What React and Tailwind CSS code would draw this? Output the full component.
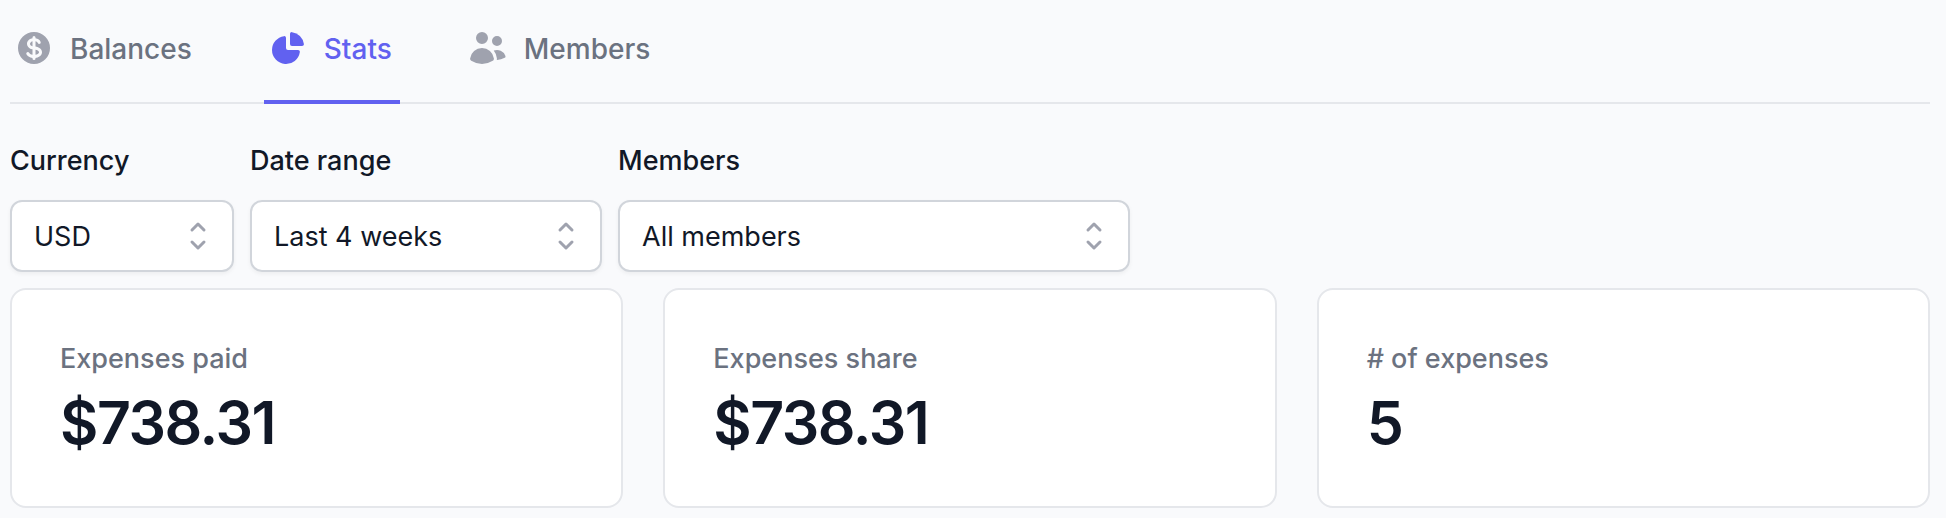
import { useState } from "react";
import { HiMiniCurrencyDollar, HiMiniChartPie, HiMiniUsers } from "react-icons/hi2";

const tabs = [
  { name: "Balances", icon: HiMiniCurrencyDollar },
  { name: "Stats", icon: HiMiniChartPie },
  { name: "Members", icon: HiMiniUsers },
];

const stats = [
  { name: "Expenses paid", value: "$738.31" },
  { name: "Expenses share", value: "$738.31" },
  { name: "# of expenses", value: "5" },
];

function SelectField({ id, label, options, width }) {
  return (
    <div className={width}>
      <label htmlFor={id} className="block font-medium text-[#111827]">
        {label}
      </label>
      <div className="mt-[18px] grid items-center">
        <select
          id={id}
          className="col-start-1 row-start-1 h-18 w-full appearance-none rounded-xl border-2 border-[#d1d5db] bg-white pl-[22px] pr-16 pt-0.5 text-[#111827] shadow-[0_2px_4px_rgba(0,0,0,0.05)]"
        >
          {options.map((option) => (
            <option key={option}>{option}</option>
          ))}
        </select>
        <svg
          viewBox="0 0 20 20"
          fill="none"
          stroke="currentColor"
          strokeWidth="1.5"
          strokeLinecap="round"
          strokeLinejoin="round"
          aria-hidden="true"
          className="pointer-events-none col-start-1 row-start-1 mr-4 size-10 justify-self-end text-[#9fa2ae]"
        >
          <path d="M7 7l3-3 3 3m0 6l-3 3-3-3" />
        </svg>
      </div>
    </div>
  );
}

export default function App() {
  const [current, setCurrent] = useState("Stats");

  return (
    <div className="min-h-screen bg-[#f9fafc] pb-2.5 pl-2.5 pr-4 font-['Inter',sans-serif] text-[27px] leading-[42px]">
      <nav className="flex gap-16 border-b-2 border-[#e5e7eb] text-[28px] leading-[42px]">
        {tabs.map((tab) => {
          const active = tab.name === current;
          return (
            <a
              key={tab.name}
              href="#"
              onClick={() => setCurrent(tab.name)}
              aria-current={active ? "page" : undefined}
              className={`-mb-0.5 flex items-start border-b-4 px-2 pb-[30px] pt-7 font-medium ${
                active
                  ? "border-[#6161f0] text-[#6161f0]"
                  : "border-transparent text-[#6b7280]"
              }`}
            >
              <tab.icon
                className={`-ml-1 mr-4 size-10 ${active ? "text-[#6161f0]" : "text-[#9fa2ae]"}`}
              />
              {tab.name}
            </a>
          );
        })}
      </nav>

      <div className="mt-9 flex gap-4">
        <SelectField id="currency" label="Currency" options={["USD"]} width="w-56" />
        <SelectField id="range" label="Date range" options={["Last 4 weeks"]} width="w-88" />
        <SelectField id="members" label="Members" options={["All members"]} width="w-128" />
      </div>

      <dl className="mt-4 grid grid-cols-3 gap-10">
        {stats.map((stat) => (
          <div key={stat.name} className="rounded-2xl border-2 border-[#e5e7eb] bg-white p-12">
            <dt className="font-medium text-[#6b7280]">{stat.name}</dt>
            <dd className="mt-2 text-[59px] leading-[70px] font-semibold tracking-tight text-[#111827]">
              {stat.value}
            </dd>
          </div>
        ))}
      </dl>
    </div>
  );
}
